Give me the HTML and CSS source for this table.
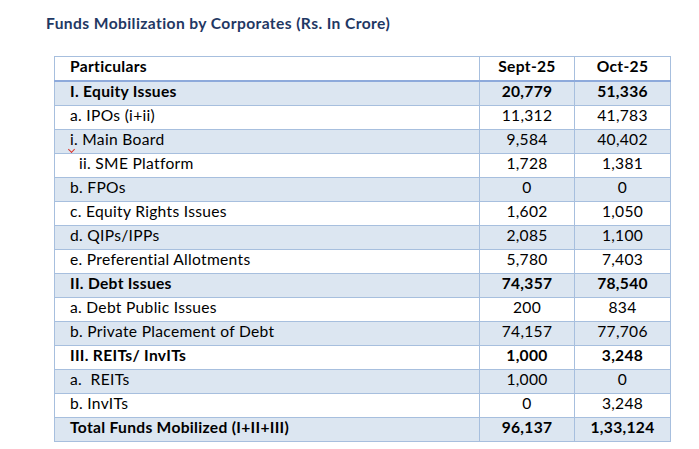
FILE: index.html
```html
<!DOCTYPE html>
<html lang="en">
<head>
<meta charset="utf-8">
<title>Funds Mobilization by Corporates</title>
<link rel="stylesheet" href="styles.css">
</head>
<body>
<div class="page">
  <h1 class="title">Funds Mobilization by Corporates (Rs. In Crore)</h1>
  <table class="funds">
    <colgroup>
      <col class="c-part">
      <col class="c-num">
      <col class="c-num-last">
    </colgroup>
    <thead>
      <tr><th>Particulars</th><th class="num">Sept-25</th><th class="num">Oct-25</th></tr>
    </thead>
    <tbody>
      <tr class="band strong"><td>I. Equity Issues</td><td class="num">20,779</td><td class="num">51,336</td></tr>
      <tr><td>a. IPOs (i+ii)</td><td class="num">11,312</td><td class="num">41,783</td></tr>
      <tr class="band"><td><span class="spell">i</span>. Main Board</td><td class="num">9,584</td><td class="num">40,402</td></tr>
      <tr><td class="indent">ii. SME Platform</td><td class="num">1,728</td><td class="num">1,381</td></tr>
      <tr class="band"><td>b. FPOs</td><td class="num">0</td><td class="num">0</td></tr>
      <tr><td>c. Equity Rights Issues</td><td class="num">1,602</td><td class="num">1,050</td></tr>
      <tr class="band"><td>d. QIPs/IPPs</td><td class="num">2,085</td><td class="num">1,100</td></tr>
      <tr><td>e. Preferential Allotments</td><td class="num">5,780</td><td class="num">7,403</td></tr>
      <tr class="band strong"><td>II. Debt Issues</td><td class="num">74,357</td><td class="num">78,540</td></tr>
      <tr><td>a. Debt Public Issues</td><td class="num">200</td><td class="num">834</td></tr>
      <tr class="band"><td>b. Private Placement of Debt</td><td class="num">74,157</td><td class="num">77,706</td></tr>
      <tr class="strong"><td>III. REITs/ InvITs</td><td class="num">1,000</td><td class="num">3,248</td></tr>
      <tr class="band"><td>a.&nbsp; REITs</td><td class="num">1,000</td><td class="num">0</td></tr>
      <tr><td>b. InvITs</td><td class="num">0</td><td class="num">3,248</td></tr>
      <tr class="band strong"><td>Total Funds Mobilized (I+II+III)</td><td class="num">96,137</td><td class="num">1,33,124</td></tr>
    </tbody>
  </table>
</div>
</body>
</html>
```

FILE: styles.css
```css
html, body {
  margin: 0;
  padding: 0;
  background: #ffffff;
}

body {
  font-family: Lato, "Liberation Sans", sans-serif;
  color: #000000;
}

.page {
  padding-left: 46px;
}

.title {
  margin: 14px 0 0 0;
  font-size: 15.6px;
  line-height: 18px;
  font-weight: 700;
  letter-spacing: 0.4px;
  color: #1f3864;
}

.funds {
  margin: 24px 0 0 8px;
  border-collapse: collapse;
  table-layout: fixed;
  width: 616px;
  font-size: 15.6px;
  letter-spacing: 0.3px;
}

.c-part { width: 425px; }
.c-num { width: 95px; }
.c-num-last { width: 96px; }

.funds th,
.funds td {
  border: 1px solid #a7bfde;
  height: 23px;
  padding: 0 0 0 15px;
  line-height: 18px;
  vertical-align: top;
  text-align: left;
  font-weight: 400;
  white-space: nowrap;
}

.funds th {
  font-weight: 700;
  border-bottom: 2px solid #8eaadb;
}

.funds .num {
  text-align: center;
  padding-left: 0;
}

.funds .band td {
  background: #dce6f1;
}

.funds .strong td {
  font-weight: 700;
}

.funds td.indent {
  padding-left: 24px;
}

.spell {
  position: relative;
}

.spell::after {
  content: "";
  position: absolute;
  left: -1px;
  top: 17px;
  width: 4px;
  height: 4px;
  border-right: 1.5px solid #d9342b;
  border-bottom: 1.5px solid #d9342b;
  transform: rotate(45deg);
  transform-origin: center;
}
```
